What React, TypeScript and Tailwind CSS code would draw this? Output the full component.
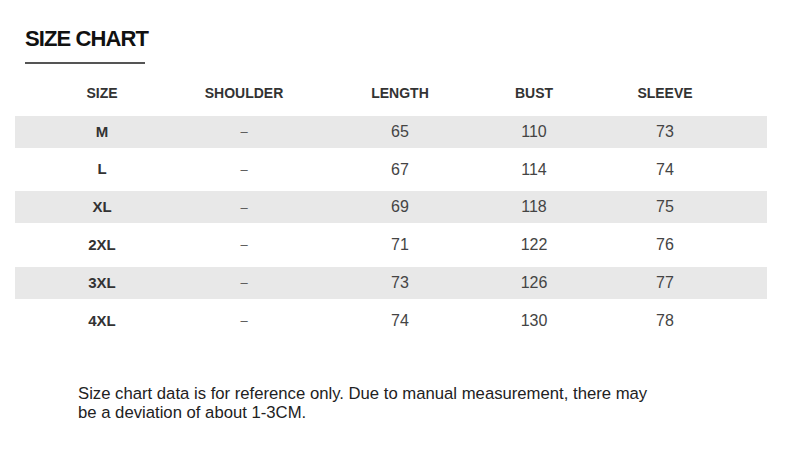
const headers = ['SIZE', 'SHOULDER', 'LENGTH', 'BUST', 'SLEEVE'];

const rows = [
  { size: 'M', length: 65, bust: 110, sleeve: 73 },
  { size: 'L', length: 67, bust: 114, sleeve: 74 },
  { size: 'XL', length: 69, bust: 118, sleeve: 75 },
  { size: '2XL', length: 71, bust: 122, sleeve: 76 },
  { size: '3XL', length: 73, bust: 126, sleeve: 77 },
  { size: '4XL', length: 74, bust: 130, sleeve: 78 },
];

const cols = 'grid grid-cols-[174px_110px_202px_66px_196px_1fr] items-center';

export default function App() {
  return (
    <div className="w-[790px] h-[452px] bg-white font-['Liberation_Sans',Arial,sans-serif] text-[#333]">
      <div className="pt-[26px] pl-[25px]">
        <h1 className="text-[22px] leading-[26px] font-bold tracking-[-0.9px] text-[#111]">SIZE CHART</h1>
        <div className="mt-[10px] w-[120px] h-[2px] bg-[#555]" />
      </div>

      <div className="mt-[13px] mx-[15px] w-[752px] flex flex-col gap-[5.8px]">
        <div className={`${cols} h-[33px] text-[14px] font-bold text-[#333]`}>
          {headers.map(h => (
            <div key={h} className="text-center">{h}</div>
          ))}
        </div>
        {rows.map((r, i) => (
          <div
            key={r.size}
            className={`${cols} h-[32px] ${i % 2 === 0 ? 'bg-[#e8e8e8]' : 'bg-white'}`}
          >
            <div className="text-center text-[15px] font-bold text-[#333]">{r.size}</div>
            <div className="text-center text-[13px] text-[#555]">–</div>
            <div className="text-center text-[16px] text-[#444]">{r.length}</div>
            <div className="text-center text-[16px] text-[#444]">{r.bust}</div>
            <div className="text-center text-[16px] text-[#444]">{r.sleeve}</div>
          </div>
        ))}
      </div>

      <p className="mt-[47px] ml-[78px] w-[580px] text-[16.7px] leading-[19.5px] text-[#222]">
        Size chart data is for reference only. Due to manual measurement, there may be a deviation of about 1-3CM.
      </p>
    </div>
  );
}
